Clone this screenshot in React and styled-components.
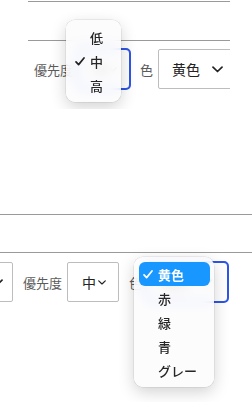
import React from 'react';
import styled, { createGlobalStyle } from 'styled-components';

const GlobalStyle = createGlobalStyle`
  html, body {
    margin: 0;
    padding: 0;
    background: #fff;
    font-family: "Noto Sans CJK JP", "Noto Sans", sans-serif;
  }
`;

const priorities = ['低', '中', '高'];
const colors = ['黄色', '赤', '緑', '青', 'グレー'];

const Chevron = () => (
  <svg width="11" height="7" viewBox="0 0 11 7" fill="none">
    <path d="M1 1.2l4.5 4.3L10 1.2" stroke="#222" strokeWidth="1.7" strokeLinecap="round" strokeLinejoin="round" />
  </svg>
);

const Check = ({ color }) => (
  <svg width="10" height="9" viewBox="0 0 10 9" fill="none">
    <path d="M1 4.8l2.6 2.8L9 1" stroke={color} strokeWidth="1.7" strokeLinecap="round" strokeLinejoin="round" />
  </svg>
);

const Page = styled.div`
  display: flex;
  flex-direction: column;
`;

// each frame is a clipped preview strip; bottom padding leaves room for open menus
const Frame = styled.section`
  display: flex;
  flex-direction: column;
  margin-left: ${(p) => p.$left || 0}px;
  width: ${(p) => p.$width}px;
  margin-top: ${(p) => p.$top || 0}px;
  padding-bottom: ${(p) => p.$room || 0}px;
  overflow: hidden;
`;

const Rule = styled.div`
  height: 1px;
  background: #9a9a9a;
  flex-shrink: 0;
`;

const Spacer = styled.div`
  height: ${(p) => p.$h}px;
`;

const Row = styled.div`
  display: flex;
  align-items: center;
  justify-content: ${(p) => (p.$end ? 'flex-end' : 'flex-start')};
  padding: ${(p) => (p.$end ? '0 24px 0 0' : '0 0 0 6px')};
  margin-top: ${(p) => p.$top}px;
  height: 40px;
`;

const Label = styled.span`
  flex-shrink: 0;
  font-size: 13px;
  color: #5c5c5c;
  margin: 0 5px 0 10px;
  &:first-child {
    margin-left: 0;
  }
`;

const Field = styled.div`
  position: relative;
  flex-shrink: 0;
`;

const Select = styled.div`
  box-sizing: border-box;
  width: ${(p) => p.$w}px;
  height: 40px;
  display: flex;
  align-items: center;
  justify-content: ${(p) => (p.$center ? 'center' : 'space-between')};
  gap: 2px;
  padding: ${(p) => (p.$center ? '0 12px 0 14px' : `0 ${p.$pr || 15}px 0 13px`)};
  border: 1px solid #bdbdbd;
  border-radius: 2px;
  background: #fff;
  font-size: 14px;
  color: #222;
  outline: ${(p) => (p.$focus ? '2.5px solid #2d55e6' : 'none')};
  outline-offset: -1px;
  ${(p) => p.$focus && 'border-radius: 4px;'}
`;

const Menu = styled.ul`
  position: absolute;
  left: ${(p) => p.$x}px;
  top: ${(p) => p.$y}px;
  width: ${(p) => p.$w}px;
  box-sizing: border-box;
  margin: 0;
  padding: 5px 4px 5px 5px;
  list-style: none;
  background: rgba(252, 252, 253, 0.84);
  backdrop-filter: blur(6px);
  border-radius: 9px;
  box-shadow: 0 0 0 0.5px rgba(0, 0, 0, 0.12), 0 5px 16px rgba(0, 0, 0, 0.18);
  z-index: 2;
`;

const Item = styled.li`
  display: flex;
  align-items: center;
  height: 24px;
  border-radius: 6px;
  padding-left: 4px;
  font-size: 13px;
  color: ${(p) => (p.$active ? '#fff' : '#262626')};
  font-weight: ${(p) => (p.$active ? 700 : 500)};
  background: ${(p) => (p.$active ? '#1797ff' : 'transparent')};
`;

const Mark = styled.span`
  width: 15px;
  display: flex;
  align-items: center;
`;

const Dropdown = ({ items, selected, active, x, y, w }) => (
  <Menu $x={x} $y={y} $w={w}>
    {items.map((it) => (
      <Item key={it} $active={it === active}>
        <Mark>{it === selected && <Check color={it === active ? '#fff' : '#222'} />}</Mark>
        {it}
      </Item>
    ))}
  </Menu>
);

export default function App() {
  return (
    <Page>
      <GlobalStyle />
      <Frame $left={28} $width={202} $top={1} $room={20}>
        <Rule />
        <Spacer $h={38} />
        <Rule />
        <Row $top={8}>
          <Label>優先度</Label>
          <Field>
            <Select $w={52} $center $focus>
              中<Chevron />
            </Select>
            <Dropdown items={priorities} selected="中" x={-12} y={-29} w={55} />
          </Field>
          <Label>色</Label>
          <Field>
            <Select $w={81}>
              黄色<Chevron />
            </Select>
          </Field>
        </Row>
      </Frame>

      <Frame $width={252} $top={105} $room={100}>
        <Rule />
        <Spacer $h={37} />
        <Rule />
        <Row $top={9} $end>
          <Field>
            <Select $w={80} $pr={9}>
              未着手<Chevron />
            </Select>
          </Field>
          <Label>優先度</Label>
          <Field>
            <Select $w={52} $center>
              中<Chevron />
            </Select>
          </Field>
          <Label>色</Label>
          <Field>
            <Select $w={81} $focus>
              黄色<Chevron />
            </Select>
            <Dropdown items={colors} selected="黄色" active="黄色" x={-13} y={-5} w={80} />
          </Field>
        </Row>
      </Frame>
    </Page>
  );
}
